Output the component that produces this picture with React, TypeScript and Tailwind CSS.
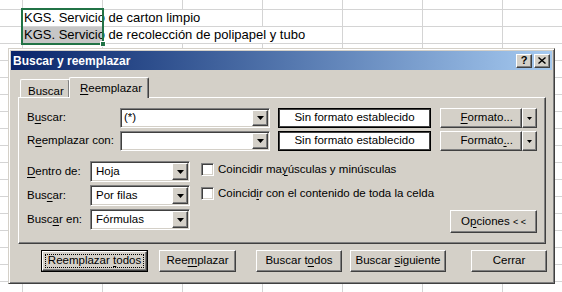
import type { ReactNode } from 'react'

const RAISED =
  'bg-[#d4d0c8] border border-t-white border-l-white border-r-[#404040] border-b-[#404040] shadow-[inset_-1px_-1px_0_#808080]'
const SUNKEN =
  'bg-white border border-t-[#808080] border-l-[#808080] border-r-white border-b-white shadow-[inset_1px_1px_0_#404040,inset_-1px_-1px_0_#d4d0c8]'

const COLS = [23, 80, 80, 80, 80, 80, 80, 80]
const COL_W = ['w-[23px]', 'w-[80px]', 'w-[80px]', 'w-[80px]', 'w-[80px]', 'w-[80px]', 'w-[80px]', 'w-[80px]']

// columns whose right gridline is hidden by overflowing text, per row
const HIDDEN: Record<number, number[]> = { 1: [1, 2], 2: [1, 2, 3] }

function U({ children }: { children: ReactNode }) {
  return <span className="underline decoration-1 underline-offset-[2px]">{children}</span>
}

function Arrow({ small = false }: { small?: boolean }) {
  return small ? (
    <svg width="5" height="3" viewBox="0 0 5 3">
      <path d="M0 0h5L2.5 3z" fill="#000" />
    </svg>
  ) : (
    <svg width="7" height="4" viewBox="0 0 7 4">
      <path d="M0 0h7L3.5 4z" fill="#000" />
    </svg>
  )
}

function DropBtn() {
  return (
    <div className={`${RAISED} w-[16px] shrink-0 flex items-center justify-center`}>
      <Arrow />
    </div>
  )
}

function Combo({ value, className }: { value: string; className: string }) {
  return (
    <div className={`${SUNKEN} ${className} flex p-px shrink-0`}>
      <div className="flex-1 flex items-center pl-[2px]">{value}</div>
      <DropBtn />
    </div>
  )
}

function Sheet() {
  return (
    <div className="absolute inset-0 flex flex-col font-['Liberation_Sans',Arial,sans-serif] text-[13px] text-black">
      {Array.from({ length: 18 }).map((_, r) => (
        <div key={r} className={`flex shrink-0 ${r === 0 ? 'h-[10px]' : 'h-[17px]'}`}>
          {COLS.map((_, c) => {
            const hide = HIDDEN[r]?.includes(c)
            return (
              <div
                key={c}
                className={`${COL_W[c]} shrink-0 border-b border-[#d4d4d4] ${hide ? '' : 'border-r'} ${
                  r === 2 && c === 1 ? 'bg-[#c6c6c6]' : ''
                } flex items-center whitespace-nowrap`}
              >
                {r === 1 && c === 1 && <span className="pl-px">KGS. Servicio de carton limpio</span>}
                {r === 2 && c === 1 && (
                  <span className="pl-px">KGS. Servicio de recolección de polipapel y tubo</span>
                )}
              </div>
            )
          })}
        </div>
      ))}
      {/* selection box */}
      <div className="absolute left-[21px] top-[8px] w-[83px] h-[37px] border-2 border-[#217346]" />
      <div className="absolute left-[100px] top-[41px] w-[6px] h-[6px] bg-[#217346] border border-white" />
    </div>
  )
}

function Button({ children, className }: { children: ReactNode; className: string }) {
  return (
    <div className={`${RAISED} ${className} h-[22px] shrink-0 flex items-center justify-center`}>
      <span>{children}</span>
    </div>
  )
}

export default function App() {
  return (
    <div className="relative w-[562px] h-[292px] overflow-hidden bg-white">
      <Sheet />

      {/* dialog */}
      <div className="absolute left-[8px] top-[48px] w-[547px] h-[236px] bg-[#d4d0c8] border border-t-[#d4d0c8] border-l-[#d4d0c8] border-r-[#404040] border-b-[#404040] shadow-[inset_1px_1px_0_#fff,inset_-1px_-1px_0_#808080] p-[2px] flex flex-col font-['Liberation_Sans',Arial,sans-serif] text-[11.5px] text-black">
        {/* title bar */}
        <div className="h-[19px] shrink-0 flex items-center bg-gradient-to-r from-[#0a246a] to-[#a6caf0] pl-[2px] pr-[2px]">
          <span className="text-white font-bold text-[12px] flex-1">Buscar y reemplazar</span>
          <div className={`${RAISED} w-[16px] h-[14px] flex items-center justify-center font-bold text-[11px] leading-none`}>
            ?
          </div>
          <div className={`${RAISED} w-[16px] h-[14px] ml-[2px] flex items-center justify-center`}>
            <svg width="8" height="7" viewBox="0 0 8 7">
              <path d="M0.5 0.5l7 6M7.5 0.5l-7 6" stroke="#000" strokeWidth="1.4" />
            </svg>
          </div>
        </div>

        {/* tabs */}
        <div className="mt-[7px] ml-[7px] h-[20px] flex items-end pl-[2px]">
          <div className="w-[50px] h-[18px] border-t border-l border-white border-r border-r-[#404040] shadow-[inset_-1px_0_0_#808080] rounded-t-[2px] pl-[7px] pt-[3px]">
            <U>B</U>uscar
          </div>
          <div className="relative z-10 -mb-px ml-[-1px] w-[80px] h-[21px] bg-[#d4d0c8] border-t border-l border-white border-r border-r-[#404040] shadow-[inset_-1px_0_0_#808080] rounded-t-[2px] pl-[10px] pt-[2px]">
            <U>R</U>eemplazar
          </div>
        </div>

        {/* panel */}
        <div className="ml-[7px] w-[528px] h-[147px] shrink-0 border border-t-white border-l-white border-r-[#404040] border-b-[#404040] shadow-[inset_-1px_-1px_0_#808080] pt-[10px] pl-[8px] pr-[8px] flex flex-col">
          {[
            { label: <>B<U>u</U>scar:</>, value: '(*)', fmt: <><U>F</U>ormato...</> },
            { label: <>R<U>e</U>emplazar con:</>, value: '', fmt: <>Formato<U>.</U>..</> },
          ].map((row, i) => (
            <div key={i} className={`flex h-[20px] ${i ? 'mt-[3px]' : ''}`}>
              <div className="w-[93px] flex items-center">
                <span>{row.label}</span>
              </div>
              <Combo value={row.value} className="w-[150px] h-[20px]" />
              <div className="ml-[8px] w-[153px] h-[20px] bg-white border border-black shadow-[inset_0_0_0_1px_#404040] flex items-center justify-center">
                Sin formato establecido
              </div>
              <div className={`${RAISED} ml-[9px] w-[82px] h-[20px] flex items-center justify-end pr-[8px]`}>
                <span>{row.fmt}</span>
              </div>
              <div className={`${RAISED} w-[15px] h-[20px] flex items-center justify-center`}>
                <Arrow small />
              </div>
            </div>
          ))}

          <div className="mt-[10px] h-[72px] flex">
            <div className="flex flex-col gap-[3px]">
              {[
                { label: <><U>D</U>entro de:</>, value: 'Hoja' },
                { label: <>Bus<U>c</U>ar:</>, value: 'Por filas' },
                { label: <>Busc<U>a</U>r en:</>, value: 'Fórmulas' },
              ].map((row, i) => (
                <div key={i} className="flex h-[21px]">
                  <div className="w-[63px] flex items-center">
                    <span>{row.label}</span>
                  </div>
                  <Combo value={row.value} className="w-[100px] h-[21px] [&>div:first-child]:pl-[4px]" />
                </div>
              ))}
            </div>

            <div className="ml-[11px] flex flex-col gap-[11px] pt-[2px]">
              <div className="flex items-center h-[13px]">
                <div className={`${SUNKEN} w-[13px] h-[13px]`} />
                <span className="ml-[4px]">
                  Coincidir ma<U>y</U>úsculas y minúsculas
                </span>
              </div>
              <div className="flex items-center h-[13px]">
                <div className={`${SUNKEN} w-[13px] h-[13px]`} />
                <span className="ml-[4px]">
                  Coincid<U>i</U>r con el contenido de toda la celda
                </span>
              </div>
            </div>

            <div className="flex-1 flex items-end justify-end">
              <div className={`${RAISED} w-[87px] h-[23px] flex items-center justify-center`}>
                <span>
                  O<U>p</U>ciones <span className="text-[9px]">&lt; &lt;</span>
                </span>
              </div>
            </div>
          </div>
        </div>

        {/* buttons */}
        <div className="mt-[6px] ml-[30px] flex">
          <div className="w-[107px] h-[22px] border border-black flex">
            <div className={`${RAISED} flex-1 flex p-[2px]`}>
              <div className="flex-1 border border-dotted border-black flex items-center justify-center">
                <span>
                  Reemplazar <U>t</U>odos
                </span>
              </div>
            </div>
          </div>
          <Button className="ml-[11px] w-[77px]">
            Ree<U>m</U>plazar
          </Button>
          <Button className="ml-[20px] w-[86px]">
            Buscar t<U>o</U>dos
          </Button>
          <Button className="ml-[8px] w-[96px]">
            Buscar <U>s</U>iguiente
          </Button>
          <Button className="ml-[25px] w-[76px]">Cerrar</Button>
        </div>
      </div>
    </div>
  )
}
